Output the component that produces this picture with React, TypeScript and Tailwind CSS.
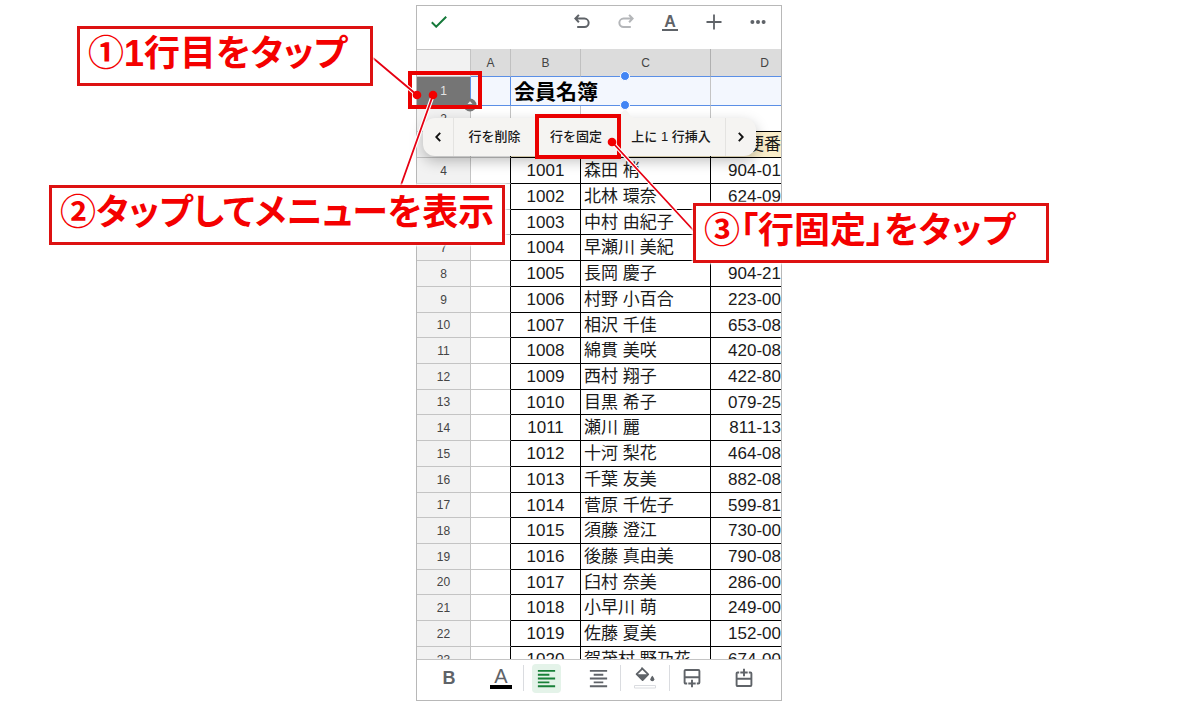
import type { ReactNode } from 'react';
import { MdFormatAlignCenter, MdFormatAlignLeft } from 'react-icons/md';

type Member = { id: string; name: string; zip: string };

const members: Member[] = [
  { id: '1001', name: '森田 梢', zip: '904-01' },
  { id: '1002', name: '北林 環奈', zip: '624-09' },
  { id: '1003', name: '中村 由紀子', zip: '' },
  { id: '1004', name: '早瀬川 美紀', zip: '' },
  { id: '1005', name: '長岡 慶子', zip: '904-21' },
  { id: '1006', name: '村野 小百合', zip: '223-00' },
  { id: '1007', name: '相沢 千佳', zip: '653-08' },
  { id: '1008', name: '綿貫 美咲', zip: '420-08' },
  { id: '1009', name: '西村 翔子', zip: '422-80' },
  { id: '1010', name: '目黒 希子', zip: '079-25' },
  { id: '1011', name: '瀬川 麗', zip: '811-13' },
  { id: '1012', name: '十河 梨花', zip: '464-08' },
  { id: '1013', name: '千葉 友美', zip: '882-08' },
  { id: '1014', name: '菅原 千佐子', zip: '599-81' },
  { id: '1015', name: '須藤 澄江', zip: '730-00' },
  { id: '1016', name: '後藤 真由美', zip: '790-08' },
  { id: '1017', name: '臼村 奈美', zip: '286-00' },
  { id: '1018', name: '小早川 萌', zip: '249-00' },
  { id: '1019', name: '佐藤 夏美', zip: '152-00' },
  { id: '1020', name: '賀茂村 野乃花', zip: '674-00' },
];

function IconButton({ label, className = '', children }: { label: string; className?: string; children: ReactNode }) {
  return (
    <button type="button" aria-label={label} className={`flex h-8 w-11 shrink-0 items-center justify-center ${className}`}>
      {children}
    </button>
  );
}

function ReturnArrow({ className }: { className: string }) {
  return (
    <svg viewBox="0 0 16 16" className={className} fill="none" stroke="currentColor" strokeWidth="2">
      <path d="M4.900 .9 1.400 4.600l3.500 3.700M1.600 4.600h8.800a4.200 4.200 0 0 1 0 8.500H3.200" />
    </svg>
  );
}

function TopBar() {
  return (
    <header className="flex h-[43px] items-start justify-between bg-white pr-px text-[#5f6368]">
      <IconButton label="完了">
        <svg viewBox="0 0 16 12" className="h-3 w-4" fill="none" stroke="#15793a" strokeWidth="2">
          <path d="M.8 6.3 5.2 10.7 15.2.8" />
        </svg>
      </IconButton>
      <div className="flex">
        <IconButton label="元に戻す">
          <ReturnArrow className="size-4" />
        </IconButton>
        <IconButton label="やり直す" className="text-[#b4b6b9]">
          <ReturnArrow className="size-4 -scale-x-100" />
        </IconButton>
        <IconButton label="書式">
          <span className="border-b-2 border-[#5f6368] px-0.5 text-base leading-[15px] font-bold">A</span>
        </IconButton>
        <IconButton label="挿入">
          <svg viewBox="0 0 16 16" className="size-4" stroke="currentColor" strokeWidth="1.8">
            <path d="M8 .5v15M.5 8h15" />
          </svg>
        </IconButton>
        <IconButton label="その他">
          <svg viewBox="0 0 16 4" className="h-1 w-4" fill="currentColor">
            <circle cx="2.4" cy="2" r="2" />
            <circle cx="8" cy="2" r="2" />
            <circle cx="13.6" cy="2" r="2" />
          </svg>
        </IconButton>
      </div>
    </header>
  );
}

function RowHead({ children }: { children: ReactNode }) {
  return (
    <th scope="row" className="border-r border-b border-[#c4c4c4] bg-[#f2f2f2] p-0 text-xs font-normal text-[#444]">
      {children}
    </th>
  );
}

function Sheet() {
  return (
    <div className="h-[610px] overflow-hidden">
      <table className="w-full table-fixed border-separate border-spacing-0 bg-white text-[17px] leading-none whitespace-nowrap text-[#1a1a1a]">
        <colgroup>
          <col className="w-[54px]" />
          <col className="w-10" />
          <col className="w-[70px]" />
          <col className="w-[130px]" />
          <col />
        </colgroup>
        <thead>
          <tr className="h-7 text-xs text-[#444]">
            <td className="border-t border-r border-b border-[#c4c4c4] bg-[#f2f2f2] p-0" />
            <th scope="col" className="border-r border-b border-r-[#c0c0c0] border-b-[#5b8fe6] bg-[#dcdcdc] p-0 font-normal">A</th>
            <th scope="col" className="border-r border-b border-r-[#c0c0c0] border-b-[#5b8fe6] bg-[#dcdcdc] p-0 font-normal">B</th>
            <th scope="col" className="border-r border-b border-r-[#b0b0b0] border-b-[#5b8fe6] bg-[#dcdcdc] p-0 font-normal">C</th>
            <th scope="col" className="border-b border-[#5b8fe6] bg-[#dcdcdc] py-0 pr-3 pl-0 text-right font-normal">D</th>
          </tr>
        </thead>
        <tbody>
          <tr className="h-[29px] bg-[#f3f7fe]">
            <th scope="row" className="border-r border-b border-r-[#5b8fe6] border-b-[#c4c4c4] bg-[#757575] p-0 text-xs font-normal text-[#e4e4e4]">1</th>
            <td className="border-r border-b border-[#5b8fe6] p-0" />
            <td colSpan={2} className="border-r border-b border-r-[#c4c4c4] border-b-[#5b8fe6] py-0 pr-0 pl-[3px] text-[21px] font-bold text-black">会員名簿</td>
            <td className="border-b border-[#5b8fe6] p-0" />
          </tr>
          <tr className="h-[26px]">
            <RowHead>2</RowHead>
            <td className="border-r border-b border-[#c4c4c4] p-0" />
            <td className="border-r border-b border-r-[#c4c4c4] border-b-black p-0" />
            <td className="border-r border-b border-r-[#c4c4c4] border-b-black p-0" />
            <td className="border-b border-black p-0" />
          </tr>
          <tr className="h-[26px]">
            <RowHead>3</RowHead>
            <td className="border-r border-b border-r-black border-b-[#c4c4c4] p-0" />
            <td className="border-r border-b border-black bg-[#fbefcb] p-0" />
            <td className="border-r border-b border-black bg-[#fbefcb] p-0" />
            <td className="border-b border-black bg-[#fbefcb] p-0 text-right">便番</td>
          </tr>
          {members.map((member, index) => (
            <tr key={member.id} className={index % 7 === 2 || index % 7 === 6 ? 'h-[25px]' : 'h-[26px]'}>
              <RowHead>{index + 4}</RowHead>
              <td className="border-r border-b border-r-black border-b-[#c4c4c4] p-0" />
              <td className="border-r border-b border-black p-0 text-center">{member.id}</td>
              <td className="border-r border-b border-black py-0 pr-0 pl-[3px]">{member.name}</td>
              <td className="border-b border-black p-0 text-right">{member.zip}</td>
            </tr>
          ))}
        </tbody>
      </table>
    </div>
  );
}

function InsertIcon({ className }: { className: string }) {
  return (
    <svg viewBox="0 0 18 20" className={className} fill="none" stroke="currentColor" strokeWidth="1.9">
      <path d="M4.200 15.500H2.600a1 1 0 0 1-1-1V3a1 1 0 0 1 1-1h12.800a1 1 0 0 1 1 1v11.500a1 1 0 0 1-1 1h-1.600M1.600 9.200h14.800M9 11.800v7.400M5.300 15.500h7.400" />
    </svg>
  );
}

function BottomBar() {
  return (
    <footer className="flex h-[41px] items-center border-t border-[#c4c4c4] bg-white pb-1 pl-2.5 text-[#5f6368]">
      <div className="flex gap-2">
        <IconButton label="太字" className="text-lg font-bold">
          B
        </IconButton>
        <IconButton label="文字の色">
          <span className="flex flex-col items-center text-xl leading-[18px]">
            A
            <span className="h-1 w-[22px] bg-black" />
          </span>
        </IconButton>
      </div>
      <span className="h-[26px] w-px bg-[#dadce0]" />
      <div className="flex gap-2">
        <IconButton label="左揃え" className="text-[#188038]">
          <span className="flex size-[29px] items-center justify-center rounded-sm bg-[#e4f3e9]">
            <MdFormatAlignLeft className="size-[23px]" />
          </span>
        </IconButton>
        <IconButton label="中央揃え">
          <MdFormatAlignCenter className="size-[23px]" />
        </IconButton>
      </div>
      <span className="h-[26px] w-px bg-[#dadce0]" />
      <IconButton label="塗りつぶしの色" className="w-12">
        <svg viewBox="0 0 24 24" className="size-6" fill="none">
          <path d="M8.4 1.6 15.200 8.400 9.600 14 3.600 8.200 9.600 2.400" stroke="currentColor" strokeWidth="1.8" strokeLinejoin="round" />
          <path d="M3.400 8.200h12l-5 5.600a1.300 1.300 0 0 1-1.800 0z" fill="currentColor" />
          <path d="M19.300 9.700s-2 2.200-2 3.500a2 2 0 0 0 4 0c0-1.300-2-3.500-2-3.500z" fill="currentColor" />
          <path d="M1.500 19.500h21v2.500h-21z" fill="#fff" stroke="#dadce0" />
        </svg>
      </IconButton>
      <span className="h-[26px] w-px bg-[#dadce0]" />
      <div className="flex gap-2">
        <IconButton label="下に行を挿入">
          <InsertIcon className="h-5 w-[18px]" />
        </IconButton>
        <IconButton label="上に行を挿入">
          <InsertIcon className="h-5 w-[18px] -scale-y-100" />
        </IconButton>
      </div>
    </footer>
  );
}

function ContextMenu() {
  return (
    <div className="absolute top-[113px] left-[7px] w-[333px]">
      <svg viewBox="0 0 20 8" className="absolute -top-2 left-[192px] h-2 w-5" fill="#f5f4f2">
        <path d="M0 8c5 0 7-8 10-8s5 8 10 8z" />
      </svg>
      <div className="flex h-[38px] items-stretch rounded-xl bg-[#f5f4f2] text-[13px] font-medium whitespace-nowrap text-[#1a1a1a] shadow-[0_5px_14px_rgba(0,0,0,0.25)]">
        <button type="button" aria-label="前へ" className="flex w-[30px] items-center justify-center">
          <svg viewBox="0 0 6 10" className="h-2.5 w-1.5" fill="none" stroke="#111" strokeWidth="1.9">
            <path d="M5.2.8 1.2 5l4 4.2" />
          </svg>
        </button>
        <button type="button" className="w-[82px] border-l border-[#e4e3e1]">行を削除</button>
        <button type="button" className="w-[82px]">行を固定</button>
        <button type="button" className="flex-1">上に 1 行挿入</button>
        <button type="button" aria-label="次へ" className="flex w-[31px] items-center justify-center border-l border-[#e4e3e1]">
          <svg viewBox="0 0 6 10" className="h-2.5 w-1.5" fill="none" stroke="#111" strokeWidth="1.9">
            <path d="M.8.8l4 4.2-4 4.2" />
          </svg>
        </button>
      </div>
    </div>
  );
}

function SelectionHandles() {
  return (
    <svg viewBox="0 0 366 696" className="pointer-events-none absolute inset-0 h-[696px] w-[366px]">
      <circle cx="54" cy="100" r="6.5" fill="#757575" />
      <path d="M51.5 99h5L54 96.200zM51.500 101h5L54 103.800z" fill="#e8e8e8" />
      <circle cx="209" cy="71" r="4.5" fill="#4285f4" stroke="#fff" />
      <circle cx="209" cy="100" r="4.5" fill="#4285f4" stroke="#fff" />
    </svg>
  );
}

function Pointers() {
  return (
    <svg viewBox="0 0 366 696" className="pointer-events-none absolute inset-0 h-[696px] w-[366px] overflow-visible">
      <path d="M-43 53 1 90M-15 180 17 90M279 227 196 137" stroke="#fff" strokeWidth="4" />
      <path d="M-43 53 1 90M-15 180 17 90M279 227 196 137" stroke="#e60012" strokeWidth="1.8" />
      <g fill="#f20000">
        <circle cx="1" cy="90" r="4.300" />
        <circle cx="17" cy="90" r="4.300" />
        <circle cx="196" cy="137" r="4.300" />
      </g>
    </svg>
  );
}

function Callout({ className, children }: { className: string; children: ReactNode }) {
  return (
    <p
      className={`absolute flex h-[60px] items-center border-[3px] border-[#dd1111] bg-white pb-1 pl-2 text-4xl leading-none font-bold whitespace-nowrap text-[#f40000] shadow-[0_0_2px_1px_#fff] [font-feature-settings:'palt'] ${className}`}
    >
      {children}
    </p>
  );
}

export default function App() {
  return (
    <main className="flex min-h-screen items-start justify-center overflow-hidden bg-white pt-[5px] pr-1 pb-1 font-['Liberation_Sans','Noto_Sans_CJK_JP',sans-serif]">
      <section className="relative w-[366px] shrink-0">
        <div className="border border-[#b8b8b8]">
          <TopBar />
          <Sheet />
          <BottomBar />
        </div>
        <ContextMenu />
        <SelectionHandles />
        <div className="absolute top-[66px] -left-2 h-[38px] w-[74px] border-4 border-[#ea0000]" />
        <div className="absolute top-[109px] left-[119px] h-[45px] w-[86px] border-4 border-[#ea0000]" />
        <Pointers />
        <Callout className="top-[21px] -left-[339px] w-[296px]">①1行目をタップ</Callout>
        <Callout className="top-[180px] -left-[367px] w-[456px]">②タップしてメニューを表示</Callout>
        <Callout className="top-[198px] left-[277px] w-[356px]">③「行固定」をタップ</Callout>
      </section>
    </main>
  );
}
